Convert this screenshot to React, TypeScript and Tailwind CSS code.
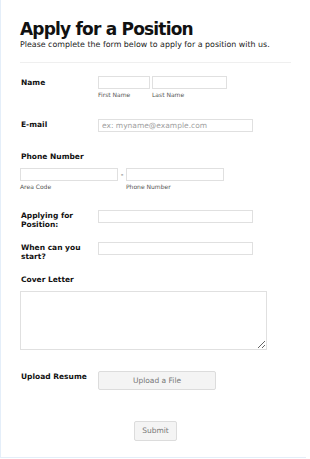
import React from "react";

const font = { fontFamily: '"DejaVu Sans", Verdana, sans-serif' };

function Label({ children, className = "" }: { children: React.ReactNode; className?: string }) {
  return (
    <div className={"w-[78px] shrink-0 pl-[1px] " + className}>
      <div className="w-[70px] text-[7.5px] font-bold text-[#111] leading-[9px]">{children}</div>
    </div>
  );
}

const inputCls =
  "block h-[13px] border border-[#e0e0e0] bg-white px-[3px] text-[7.5px] text-[#333] outline-none placeholder:text-[#a0a0a0]";

const subCls = "mt-[2px] text-[6px] leading-[8px] text-[#555]";

export default function App() {
  return (
    <div className="w-[310px] h-[459px] bg-white" style={font}>
      <div className="w-[306px] h-[458px] border-l border-b border-[#e4eef9] pl-[19px] pt-[19px]">
        <h1 className="text-[17px] leading-[20px] font-bold tracking-[-0.8px] text-[#111]">Apply for a Position</h1>
        <p className="mt-[1px] text-[7.9px] leading-[10px] text-[#222]">
          Please complete the form below to apply for a position with us.
        </p>
        <div className="mt-[12px] h-px w-[271px] bg-[#efefef]" />

        {/* Name */}
        <div className="mt-[13px] flex">
          <Label className="pt-[2px]">Name</Label>
          <div className="flex gap-[2px]">
            <div>
              <input className={inputCls + " w-[52px]"} />
              <div className={subCls}>First Name</div>
            </div>
            <div>
              <input className={inputCls + " w-[75px]"} />
              <div className={subCls}>Last Name</div>
            </div>
          </div>
        </div>

        {/* Email */}
        <div className="mt-[20px] flex items-start">
          <Label className="pt-[1px]">E-mail</Label>
          <input className={inputCls + " w-[155px]"} placeholder="ex: myname@example.com" />
        </div>

        {/* Phone */}
        <div className="mt-[20px] pl-[1px] text-[7.5px] font-bold text-[#111] leading-[10px]">Phone Number</div>
        <div className="mt-[6px] flex items-start">
          <div>
            <input className={inputCls + " w-[98px]"} />
            <div className={subCls}>Area Code</div>
          </div>
          <div className="w-[8px] text-center text-[7.5px] leading-[13px] text-[#333]">-</div>
          <div>
            <input className={inputCls + " w-[98px]"} />
            <div className={subCls}>Phone Number</div>
          </div>
        </div>

        {/* Applying for */}
        <div className="mt-[19px] flex items-start">
          <Label className="pt-[1px]">Applying for Position:</Label>
          <input className={inputCls + " w-[155px]"} />
        </div>

        {/* When */}
        <div className="mt-[13px] flex items-start">
          <Label className="pt-[1px]">When can you start?</Label>
          <input className={inputCls + " w-[155px]"} />
        </div>

        {/* Cover letter */}
        <div className="mt-[14px] pl-[1px] text-[7.5px] font-bold text-[#111] leading-[10px]">Cover Letter</div>
        <textarea className="mt-[6px] block h-[59px] w-[247px] border border-[#e0e0e0] bg-white outline-none" />

        {/* Upload */}
        <div className="mt-[21px] flex items-start">
          <Label className="pt-[1px]">Upload Resume</Label>
          <button className="h-[19px] w-[118px] rounded-[2px] border border-[#dcdcdc] bg-[#f4f4f4] text-[7.5px] text-[#777]">
            Upload a File
          </button>
        </div>

        {/* Submit */}
        <div className="mt-[31px] flex w-[271px] justify-center">
          <button className="h-[20px] w-[43px] rounded-[2px] border border-[#dcdcdc] bg-[#f4f4f4] text-[7.5px] text-[#777]">
            Submit
          </button>
        </div>
      </div>
    </div>
  );
}
